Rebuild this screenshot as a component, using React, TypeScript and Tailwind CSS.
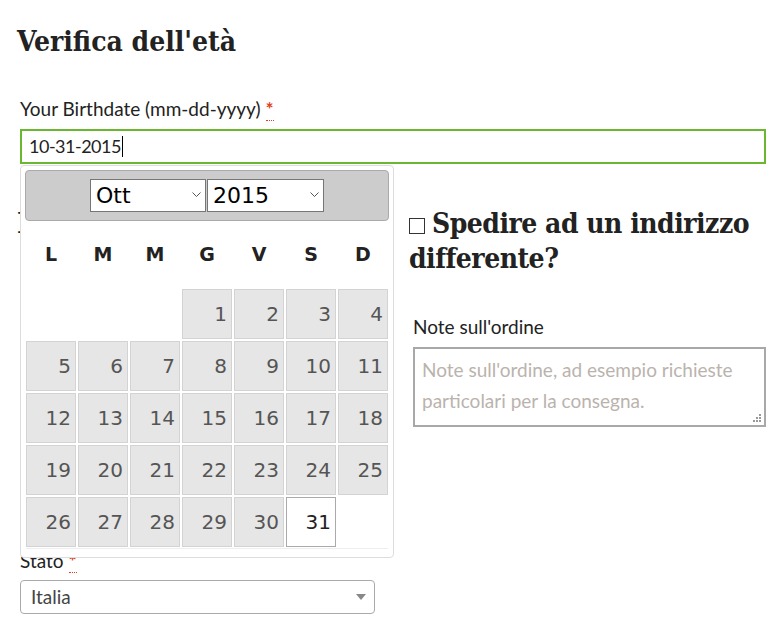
import React from 'react'

const days: (number | null)[] = [null, null, null, 1, 2, 3, 4]
for (let d = 5; d <= 31; d++) days.push(d)

const weekdays = ['L', 'M', 'M', 'G', 'V', 'S', 'D']

const Req = () => (
  <abbr className="font-bold text-[#e2401c] no-underline border-b border-dotted border-[#e2401c] ml-[5px]" title="obbligatorio">
    *
  </abbr>
)

const Chevron = () => (
  <svg className="absolute right-[4px] top-[12px]" width="9" height="5" viewBox="0 0 9 5">
    <polyline points="0.5,0.5 4.5,4.5 8.5,0.5" fill="none" stroke="#555" strokeWidth="1" />
  </svg>
)

const Datepicker = () => (
  <div className="absolute left-0 top-[36px] w-[374px] h-[393px] bg-white border border-[#dddddd] rounded-[4px] p-[4px] font-['DejaVu_Sans',sans-serif] z-10">
    <div className="h-[51px] bg-[#cccccc] border border-[#aaaaaa] rounded-[4px] flex items-center justify-center gap-[1px]">
      <div className="relative w-[116px] h-[33px] bg-white border border-[#767676] text-[22px] leading-[32px] pl-[5px] text-black">
        Ott
        <Chevron />
      </div>
      <div className="relative w-[117px] h-[33px] bg-white border border-[#767676] text-[22px] leading-[32px] pl-[5px] text-black">
        2015
        <Chevron />
      </div>
    </div>
    <div className="ml-[1px] grid grid-cols-[repeat(7,50px)] gap-x-[2px] h-[66px] items-center">
      {weekdays.map((w, i) => (
        <div key={i} className="text-center font-bold text-[19px] text-[#222]">
          {w}
        </div>
      ))}
    </div>
    <div className="ml-[1px] mt-[2px] grid grid-cols-[repeat(7,50px)] auto-rows-[50px] gap-[2px]">
      {days.map((d, i) =>
        d === null ? (
          <div key={i} />
        ) : d === 31 ? (
          <div key={i} className="bg-white border border-[#aaaaaa] text-[#212121] text-[20px] flex items-center justify-end pr-[4px]">
            {d}
          </div>
        ) : (
          <div key={i} className="bg-[#e6e6e6] border border-[#d3d3d3] text-[#555555] text-[20px] flex items-center justify-end pr-[4px]">
            {d}
          </div>
        )
      )}
    </div>
    <div className="ml-[1px] w-[362px] mt-[1px] border-t border-[#eeeeee]" />
  </div>
)

export default function App() {
  return (
    <div className="relative w-[783px] h-[631px] overflow-hidden bg-white text-[#222] font-['Lato',sans-serif]">
      <div className="pl-[20px] pt-[25px]">
        <h1 className="-ml-[3px] font-['DejaVu_Serif_Condensed','DejaVu_Serif',serif] font-bold text-[28px] leading-[34px] text-[#222]">
          Verifica dell'età
        </h1>

        <div className="mt-[38px] w-[746px]">
          <label className="block text-[19px] leading-[24px]">
            Your Birthdate (mm-dd-yyyy)
            <Req />
          </label>
          <div className="relative mt-[8px]">
            <div className="h-[35px] border-2 border-[#69b82f] flex items-center pl-[7px] text-[18px] tracking-[-0.5px] text-[#222]">
              10-31-2015
              <span className="inline-block w-px h-[21px] bg-black ml-[1px]" />
            </div>
            <Datepicker />
          </div>
        </div>

        <div className="mt-[42px] grid grid-cols-[355px_353px] gap-x-[38px]">
          <div>
            <h3 className="font-['DejaVu_Serif_Condensed','DejaVu_Serif',serif] font-bold text-[28px] leading-[35px] -ml-[3px]">
              Dettagli
            </h3>
            <div className="mt-[308px]">
              <label className="block text-[19px] leading-[24px]">
                Stato<Req />
              </label>
              <div className="relative mt-[7px] h-[34px] border border-[#aaa] rounded-[4px] flex items-center pl-[10px] text-[19px] text-[#444]">
                Italia
                <svg className="absolute right-[8px] top-[13px]" width="10" height="6" viewBox="0 0 10 6">
                  <polygon points="0,0 10,0 5,6" fill="#888" />
                </svg>
              </div>
            </div>
          </div>

          <div>
            <h3 className="-ml-[4px] font-['DejaVu_Serif_Condensed','DejaVu_Serif',serif] font-bold text-[28px] leading-[35px] tracking-[-0.5px]">
              <span className="inline-block w-[16px] h-[16px] border border-[#333] bg-white mr-[7px] align-[-1px]" />
              Spedire ad un indirizzo differente?
            </h3>
            <label className="block mt-[39px] text-[19px] leading-[24px]">Note sull'ordine</label>
            <div className="relative mt-[8px] h-[80px] border-2 border-[#a8a8a8] pt-[5px] px-[7px] text-[19px] leading-[31px] text-[#bab3ad]">
              Note sull'ordine, ad esempio richieste particolari per la consegna.
              <svg className="absolute right-[2px] bottom-[2px]" width="9" height="9" viewBox="0 0 9 9">
                <rect x="6" y="0" width="2" height="2" fill="#999" />
                <rect x="3" y="3" width="2" height="2" fill="#999" />
                <rect x="6" y="3" width="2" height="2" fill="#999" />
                <rect x="0" y="6" width="2" height="2" fill="#999" />
                <rect x="3" y="6" width="2" height="2" fill="#999" />
                <rect x="6" y="6" width="2" height="2" fill="#999" />
              </svg>
            </div>
          </div>
        </div>
      </div>
    </div>
  )
}
